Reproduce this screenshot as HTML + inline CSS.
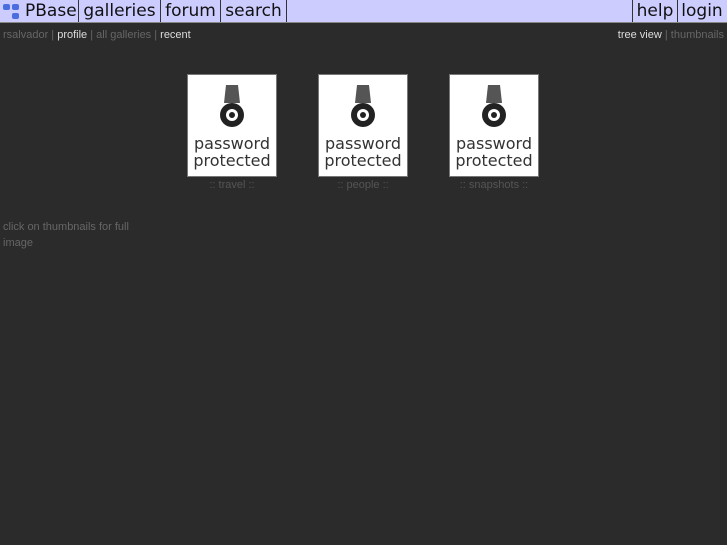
<!DOCTYPE html>
<html><head><style>
body{margin:0;background:#2b2b2b;width:727px;height:545px;overflow:hidden;font-family:"DejaVu Sans","Liberation Sans",sans-serif;position:relative}
.hdr{position:absolute;left:0;top:0;width:727px;height:22px;background:#ccccff;border-bottom:1px solid #888;}
.hdr .b{position:absolute;top:0;height:22px;border-right:1px solid #333;font-size:17px;line-height:22px;color:#111;}
.sub{position:absolute;top:29px;font-size:11px;color:#666;font-family:"Liberation Sans",sans-serif}
.sub b{font-weight:normal;color:#ddd}
.th{position:absolute;top:74px;width:88px;height:101px;background:#fff;border:1px solid #777;text-align:center}
.th .t{position:absolute;top:60px;left:0;width:88px;font-size:16px;line-height:17px;color:#333}
.lab{position:absolute;top:179px;width:90px;text-align:center;font-size:11px;color:#555;font-family:"Liberation Sans",sans-serif}
</style></head><body>
<div class="hdr">
<div class="b" style="left:0;width:78px"><svg style="position:absolute;left:3px;top:3px" width="18" height="17"><rect x="0" y="1" width="7" height="6" rx="2" fill="#4a6ee0"/><rect x="9" y="1" width="7" height="6" rx="2" fill="#4a6ee0"/><rect x="9" y="10" width="7" height="6" rx="2" fill="#4a6ee0"/></svg><span style="position:absolute;left:25px">PBase</span></div>
<div class="b" style="left:79px;width:81px;text-align:center">galleries</div>
<div class="b" style="left:161px;width:59px;text-align:center">forum</div>
<div class="b" style="left:221px;width:65px;text-align:center">search</div>
<div class="b" style="left:632px;width:44px;border-left:1px solid #333;text-align:center">help</div>
<div class="b" style="left:677px;width:50px;border-right:none;text-align:center">login</div>
</div>
<div class="sub" style="left:3px">rsalvador | <b>profile</b> | all galleries | <b>recent</b></div>
<div class="sub" style="right:3px"><b>tree view</b> | thumbnails</div>
<div class="th" style="left:187px"><svg style="position:absolute;left:26px;top:8px" width="36" height="50"><path d="M12 2 L24 2 L26 20 L10 20Z" fill="#555"/><circle cx="18" cy="32" r="12" fill="#222"/><circle cx="18" cy="32" r="6" fill="#fff"/><circle cx="18" cy="32" r="3" fill="#222"/></svg><div class="t">password<br>protected</div></div>
<div class="th" style="left:318px"><svg style="position:absolute;left:26px;top:8px" width="36" height="50"><path d="M12 2 L24 2 L26 20 L10 20Z" fill="#555"/><circle cx="18" cy="32" r="12" fill="#222"/><circle cx="18" cy="32" r="6" fill="#fff"/><circle cx="18" cy="32" r="3" fill="#222"/></svg><div class="t">password<br>protected</div></div>
<div class="th" style="left:449px"><svg style="position:absolute;left:26px;top:8px" width="36" height="50"><path d="M12 2 L24 2 L26 20 L10 20Z" fill="#555"/><circle cx="18" cy="32" r="12" fill="#222"/><circle cx="18" cy="32" r="6" fill="#fff"/><circle cx="18" cy="32" r="3" fill="#222"/></svg><div class="t">password<br>protected</div></div>
<div class="lab" style="left:187px">:: travel ::</div>
<div class="lab" style="left:318px">:: people ::</div>
<div class="lab" style="left:449px">:: snapshots ::</div>
<div style="position:absolute;left:3px;top:219px;width:135px;font-size:11px;line-height:16px;color:#666;font-family:'Liberation Sans',sans-serif">click on thumbnails for full image</div>
</body></html>
